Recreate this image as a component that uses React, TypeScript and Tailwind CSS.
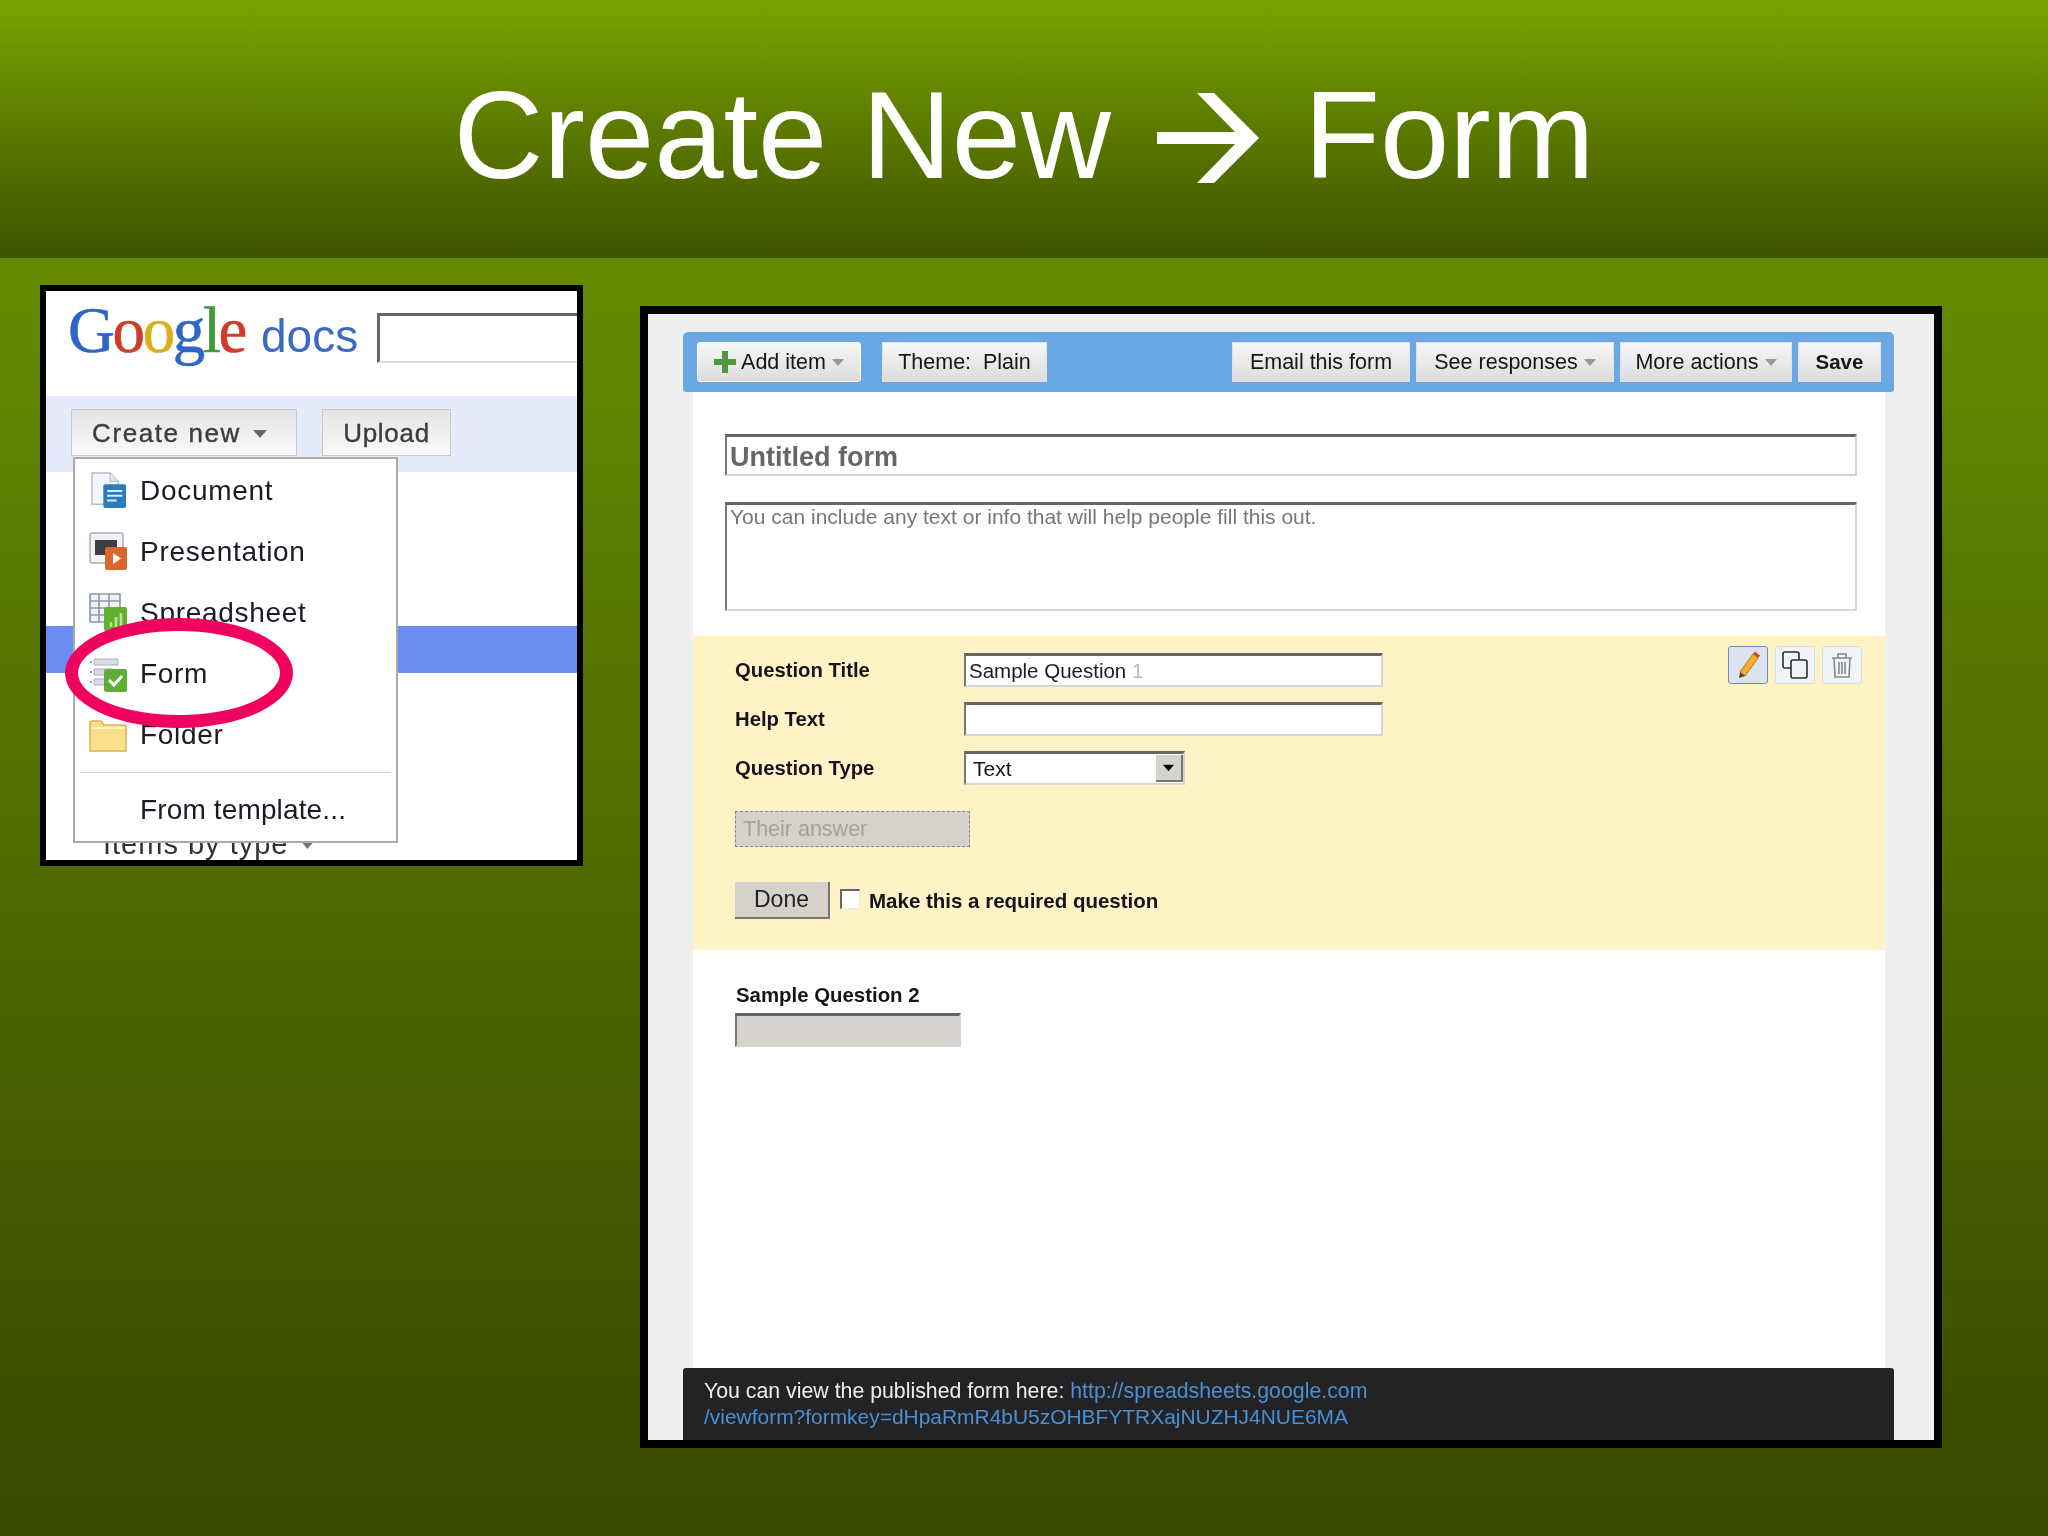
const sans = "[font-family:'Liberation_Sans',Arial,sans-serif]";

function Caret({ className }: { className: string }) {
  return (
    <svg viewBox="0 0 12 7" className={className}>
      <path d="M0 0h12L6 7z" fill="currentColor" />
    </svg>
  );
}

function TitleArrow() {
  return (
    <svg viewBox="0 0 102 90" className="mt-[6px] mr-[45px] ml-[46px] h-[90px] w-[102px]" role="img" aria-label="→">
      <path d="M40 0h17l45 45-45 45H40l38-39H0V39h78z" fill="#fff" />
    </svg>
  );
}

function DocIcon() {
  return (
    <svg viewBox="0 0 38 38" className="ml-[2px] h-[38px] w-[36px]">
      <path d="M1 1h19l9 9v24H1z" fill="#f4f6fa" stroke="#b4bcc8" strokeWidth="1.5" />
      <path d="M20 1v9h9" fill="#dfe4ec" stroke="#b4bcc8" />
      <rect x="13" y="13" width="24" height="25" rx="2" fill="#2a7bbf" />
      <path d="M17 20h16M17 25h16M17 30h10" stroke="#d9ecfa" strokeWidth="2.2" />
    </svg>
  );
}

function SlidesIcon() {
  return (
    <svg viewBox="0 0 38 38" className="h-[38px] w-[38px]">
      <rect x="1" y="1" width="33" height="30" rx="2" fill="#f1f2f5" stroke="#a8afbb" strokeWidth="1.5" />
      <rect x="6" y="8" width="22" height="15" fill="#3e3e42" />
      <rect x="16" y="15" width="22" height="23" rx="2" fill="#d9662a" />
      <path d="M24 21l8 5.5-8 5.5z" fill="#fff" />
    </svg>
  );
}

function SheetIcon() {
  return (
    <svg viewBox="0 0 38 38" className="h-[38px] w-[38px]">
      <path d="M1 1h30v28H1zM1 8h30M1 15h30M1 22h30M10 1v28M20 1v28" fill="#eef1f6" stroke="#8f98a8" strokeWidth="1.6" />
      <rect x="15" y="14" width="23" height="24" rx="2" fill="#62b030" />
      <path d="M22 34v-5M27 34V24M32 34V20" stroke="#b9e39b" strokeWidth="2.6" />
    </svg>
  );
}

function FormIcon() {
  return (
    <svg viewBox="0 0 38 38" className="h-[38px] w-[38px]">
      <path d="M5 5h24v6H5zM5 15h18v6H5zM5 25h14v6H5z" fill="#d7dde8" stroke="#a9b3c2" />
      <path d="M1 8h2M1 18h2M1 28h2" stroke="#8b95a5" strokeWidth="2" />
      <rect x="15" y="15" width="23" height="23" rx="2" fill="#5fae36" />
      <path d="M20 26l5 5 8-9" fill="none" stroke="#fff" strokeWidth="3" />
    </svg>
  );
}

function FolderIcon() {
  return (
    <svg viewBox="0 0 38 32" className="mt-[4px] h-[32px] w-[38px]">
      <path d="M1 31V3q0-2 2-2h9l3 4h21q1 0 1 1v25z" fill="#fbe08a" stroke="#d9b45a" strokeWidth="1.6" />
      <path d="M2 8h34" stroke="#fff3c4" strokeWidth="2" />
    </svg>
  );
}

function MenuRow({ icon, label, tight }: { icon?: React.ReactNode; label: string; tight?: boolean }) {
  return (
    <div className="flex h-[61px] items-center">
      <div className="flex w-[65px] shrink-0 justify-start pl-[14px]">{icon}</div>
      <span className={`pt-[2px] text-[28px] text-[#1c1a26] ${tight ? "tracking-[0.005em]" : "tracking-[0.025em]"}`}>{label}</span>
    </div>
  );
}

function GoogleDocsCrop() {
  return (
    <div className={`relative mt-[27px] h-[581px] w-[543px] shrink-0 overflow-hidden border-[6px] border-black bg-white blur-[0.4px] ${sans}`}>
      <div className="flex h-[105px] items-start pl-[22px]">
        <div className="mt-[7px] flex items-baseline">
          <span className="[font-family:'Liberation_Serif',serif] text-[65px] leading-[64px] font-normal tracking-[-2.4px] [-webkit-text-stroke:0.6px]">
            <span className="text-[#2f66c6]">G</span>
            <span className="text-[#cf3b2a]">o</span>
            <span className="text-[#dcae1f]">o</span>
            <span className="text-[#2f66c6]">g</span>
            <span className="text-[#3f9b3c]">l</span>
            <span className="text-[#cf3b2a]">e</span>
          </span>
          <span className="ml-[16px] text-[46px] leading-[64px] text-[#3e69c2]">docs</span>
        </div>
        <div className="mt-[22px] ml-[19px] h-[50px] flex-1 border-t-[3px] border-b-[2px] border-l-[3px] border-t-[#666] border-b-[#ddd] border-l-[#666] bg-white" />
      </div>

      <div className="flex h-[76px] items-start gap-[25px] bg-[#e6ebfa] pt-[13px] pl-[25px]">
        <div className="flex h-[47px] w-[226px] items-center border border-[#c8c8c8] bg-linear-to-b from-[#e4e4e4] to-[#fafafa] pt-[2px] pl-[20px] text-[26px] tracking-[1.6px] text-[#3c3c44] [-webkit-text-stroke:0.4px_#3c3c44]">
          Create new
          <Caret className="ml-[11px] h-[8px] w-[16px] text-[#666]" />
        </div>
        <div className="flex h-[47px] w-[129px] items-center justify-center border border-[#c8c8c8] bg-linear-to-b from-[#e4e4e4] to-[#fafafa] pt-[2px] text-[26px] tracking-[0.7px] text-[#3c3c44] [-webkit-text-stroke:0.4px_#3c3c44]">
          Upload
        </div>
      </div>

      <div className="mt-[154px] h-[47px] bg-[#6b8cf0]" />
      <div className="mt-[155px] pl-[57px] text-[29px] leading-[32px] tracking-[1px] text-[#333]">
        Items by type
        <Caret className="ml-[14px] inline h-[6px] w-[11px] text-[#777]" />
      </div>

      {/* menu hangs off the Create new button */}
      <div className="absolute top-[166px] left-[27px] h-[386px] w-[325px] border-2 border-[#aaa] bg-white">
        <MenuRow icon={<DocIcon />} label="Document" />
        <MenuRow icon={<SlidesIcon />} label="Presentation" />
        <MenuRow icon={<SheetIcon />} label="Spreadsheet" />
        <MenuRow icon={<FormIcon />} label="Form" />
        <MenuRow icon={<FolderIcon />} label="Folder" />
        <div className="mx-[5px] mt-[8px] h-[1px] bg-[#d6d6d6]" />
        <div className="mt-[5px]">
          <MenuRow label="From template..." tight />
        </div>
      </div>

      {/* hand drawn highlight over the menu */}
      <div className="absolute top-[327px] left-[19px] h-[110px] w-[228px] rounded-[50%] border-[13px] border-[#f0035f]" />
    </div>
  );
}

function ToolbarButton({ label, width, caret, plus, bold, white }: { label: string; width: string; caret?: boolean; plus?: boolean; bold?: boolean; white?: boolean }) {
  return (
    <div
      className={`flex h-[40px] items-center justify-center gap-[6px] border bg-linear-to-b from-[#f7f7f7] to-[#dcdcdc] text-[21.5px] text-[#15131c] ${width} ${bold ? "font-bold" : ""} ${white ? "rounded-[3px] border-white" : "border-[#dfe3e8]"}`}
    >
      {plus && (
        <svg viewBox="0 0 22 22" className="mr-[-1px] h-[22px] w-[22px]">
          <path d="M8 0h6v8h8v6h-8v8H8v-8H0V8h8z" fill="#56953f" />
        </svg>
      )}
      <span className={bold ? "text-[20.5px]" : ""}>{label}</span>
      {caret && <Caret className="h-[7px] w-[12px] text-[#999]" />}
    </div>
  );
}

function IconBox({ active, children }: { active?: boolean; children: React.ReactNode }) {
  return (
    <div
      className={`flex h-[38px] w-[40px] items-center justify-center rounded-[3px] border ${active ? "border-[#6b8fc0] bg-[#dde3ee]" : "border-[#d8dee8] bg-[#f0f3f8]"}`}
    >
      {children}
    </div>
  );
}

function TextBox({ className, children }: { className: string; children?: React.ReactNode }) {
  return (
    <div className={`border-t-[3px] border-r-2 border-b-2 border-l-2 border-t-[#666] border-r-[#d5d5d5] border-b-[#d5d5d5] border-l-[#777] ${className}`}>
      {children}
    </div>
  );
}

function QuestionRow({ label, children, className }: { label: string; children: React.ReactNode; className?: string }) {
  return (
    <div className={`flex h-[34px] items-center ${className ?? ""}`}>
      <span className="w-[229px] pt-[1px] text-[20.3px] font-bold text-[#15131c]">{label}</span>
      {children}
    </div>
  );
}

function FormEditor() {
  return (
    <div className={`flex h-[1142px] w-[1302px] shrink-0 flex-col overflow-hidden border-[8px] border-black bg-[#eeeeee] pt-[18px] pr-[40px] pl-[35px] blur-[0.4px] ${sans}`}>
      <div className="flex h-[60px] shrink-0 items-center rounded-t-[5px] rounded-b-[3px] bg-[#6ba8e3] pr-[13px] pl-[14px]">
        <ToolbarButton label="Add item" width="w-[164px]" caret plus white />
        <div className="ml-[21px]">
          <ToolbarButton label="Theme:  Plain" width="w-[165px] whitespace-pre" />
        </div>
        <div className="ml-auto flex gap-[6px]">
          <ToolbarButton label="Email this form" width="w-[178px]" />
          <ToolbarButton label="See responses" width="w-[198px]" caret />
          <ToolbarButton label="More actions" width="w-[172px]" caret />
          <ToolbarButton label="Save" width="w-[83px]" bold />
        </div>
      </div>

      <div className="mr-[9px] ml-[10px] flex-1 bg-white pt-[42px]">
        <TextBox className="mx-[32px] flex h-[42px] w-[1132px] items-center pt-[3px] pl-[3px] text-[27px] font-bold text-[#666]">
          Untitled form
        </TextBox>
        <TextBox className="mx-[32px] mt-[26px] h-[109px] w-[1132px] pl-[3px] text-[21px] leading-[24px] text-[#777]">
          You can include any text or info that will help people fill this out.
        </TextBox>

        <div className="mt-[25px] flex h-[314px] justify-between bg-[#fff2c4] pr-[22px] pl-[42px]">
          <div className="pt-[17px]">
            <QuestionRow label="Question Title">
              <TextBox className="flex h-[34px] w-[419px] items-center bg-white pt-[1px] pl-[3px] text-[20.5px] text-[#1c1a26]">
                <span>
                  Sample Question <span className="text-[#bbb]">1</span>
                </span>
              </TextBox>
            </QuestionRow>
            <QuestionRow label="Help Text" className="mt-[15px]">
              <TextBox className="h-[34px] w-[419px] bg-white" />
            </QuestionRow>
            <QuestionRow label="Question Type" className="mt-[15px]">
              <TextBox className="flex h-[34px] w-[221px] items-center justify-between bg-white pl-[7px] text-[21px] text-[#15131c]">
                Text
                <div className="flex h-[27px] w-[27px] items-center justify-center border-r-2 border-b-2 border-r-[#777] border-b-[#777] bg-[#d6d3cc]">
                  <Caret className="h-[8px] w-[11px] text-black" />
                </div>
              </TextBox>
            </QuestionRow>
            <div className="mt-[26px] flex h-[36px] w-[235px] items-center border-[1.5px] border-dashed border-[#8a8780] bg-[#d6d2cb] pl-[7px] text-[21.5px] text-[#a5a19a]">
              Their answer
            </div>
            <div className="mt-[35px] flex h-[37px] items-center">
              <div className="flex h-[37px] w-[95px] items-center justify-center border-r-2 border-b-2 border-r-[#777] border-b-[#777] bg-[#d6d2cb] text-[23px] text-[#222]">
                Done
              </div>
              <div className="mb-[4px] ml-[10px] h-[20px] w-[20px] border-t-2 border-r border-b border-l-2 border-t-[#666] border-r-[#e8e8e8] border-b-[#e8e8e8] border-l-[#666] bg-white" />
              <span className="ml-[9px] pt-[2px] text-[20.5px] font-bold text-[#15131c]">Make this a required question</span>
            </div>
          </div>

          <div className="flex gap-[7px] pt-[10px] pr-[1px]">
            <IconBox active>
              <svg viewBox="0 0 24 28" className="h-[28px] w-[24px]">
                <path d="M4 21L17 3l5 4L9 25z" fill="#f2b02e" stroke="#b57a14" strokeWidth="1" />
                <path d="M17 3l2-2.5 5 4-2 2.5z" fill="#d9442f" />
                <path d="M4 21l5 4-6 2z" fill="#5d4a32" />
              </svg>
            </IconBox>
            <IconBox>
              <svg viewBox="0 0 26 28" className="h-[28px] w-[26px]">
                <rect x="1" y="1" width="16" height="16" rx="2" fill="none" stroke="#2c2c30" strokeWidth="1.6" />
                <rect x="9" y="9" width="16" height="18" rx="2" fill="#f0f3f8" stroke="#2c2c30" strokeWidth="1.6" />
              </svg>
            </IconBox>
            <IconBox>
              <svg viewBox="0 0 22 26" className="h-[26px] w-[22px]" fill="none" stroke="#85888e" strokeWidth="1.6">
                <path d="M1 6h20M7 6V2h8v4M3 6l1 19h14l1-19M8 10v12M11 10v12M14 10v12" />
              </svg>
            </IconBox>
          </div>
        </div>

        <div className="mt-[32px] ml-[42px]">
          <div className="h-[26px] pl-[1px] text-[20.4px] leading-[26px] font-bold text-[#15131c]">Sample Question 2</div>
          <TextBox className="mt-[5px] h-[34px] w-[226px] bg-[#d6d3ce]" />
        </div>
      </div>

      <div className="h-[72px] shrink-0 rounded-t-[3px] bg-[#232325] pt-[10px] pl-[21px] leading-[26px] text-[#eee]">
        <div className="text-[21.3px]">
          You can view the published form here: <span className="text-[#4b8fd1]">http://spreadsheets.google.com</span>
        </div>
        <div className="text-[20.95px] text-[#4b8fd1]">/viewform?formkey=dHpaRmR4bU5zOHBFYTRXajNUZHJ4NUE6MA</div>
      </div>
    </div>
  );
}

export default function App() {
  return (
    <div className="flex h-[1536px] w-[2048px] flex-col">
      <header className={`flex h-[258px] shrink-0 items-center justify-center bg-linear-to-b from-[#7aa300] to-[#3f5300] pt-[12px] ${sans}`}>
        <h1 className="flex items-center text-[124.5px] leading-none font-normal text-white">
          Create New
          <TitleArrow />
          Form
        </h1>
      </header>
      <main className="flex flex-1 items-start gap-[57px] bg-linear-to-b from-[#668b00] to-[#394800] pl-[40px]">
        <GoogleDocsCrop />
        <div className="mt-[48px]">
          <FormEditor />
        </div>
      </main>
    </div>
  );
}
